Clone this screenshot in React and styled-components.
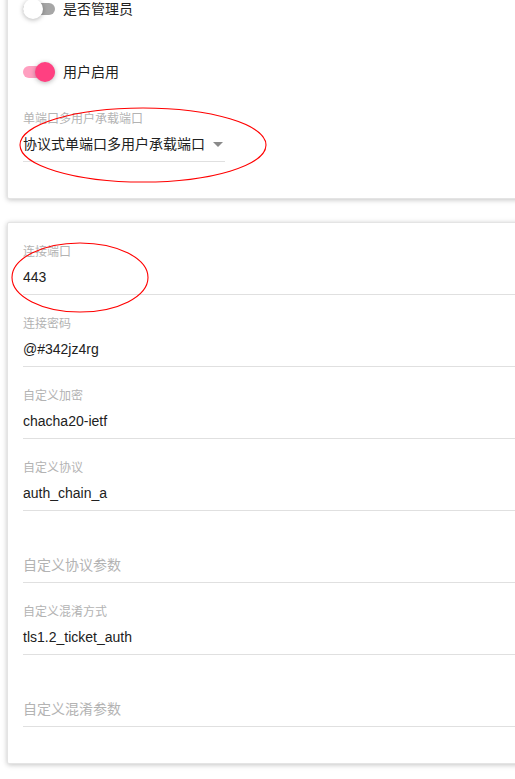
import React from "react";
import styled, { createGlobalStyle } from "styled-components";

const GlobalStyle = createGlobalStyle`
  html, body {
    margin: 0;
    padding: 0;
    background: #ffffff;
    overflow: hidden;
  }
  body {
    font-family: "Liberation Sans", "Noto Sans CJK SC", sans-serif;
  }
`;

const Page = styled.div`
  position: relative;
  width: 515px;
  height: 779px;
  overflow: hidden;
`;

const Column = styled.div`
  display: flex;
  flex-direction: column;
  gap: 23px;
  padding-left: 7px;
  margin-top: -20px;
  margin-right: -40px;
`;

const Card = styled.div`
  background: #ffffff;
  border: 1px solid #e4e4e4;
  border-radius: 2px;
  box-shadow: 0 1px 6px rgba(0, 0, 0, 0.12), 0 1px 4px rgba(0, 0, 0, 0.12);
  padding: ${(p) => (p.$top ? "16px" : "0")} 0 36px 15px;
  display: flex;
  flex-direction: column;
`;

const ToggleRow = styled.div`
  display: flex;
  align-items: center;
  gap: 8px;
  height: 24px;
  margin-bottom: ${(p) => p.$gap || 0}px;
`;

const ToggleBox = styled.div`
  position: relative;
  width: 32px;
  height: 20px;
  flex-shrink: 0;
`;

const Track = styled.div`
  position: absolute;
  top: 4px;
  left: 0;
  width: 32px;
  height: 12px;
  border-radius: 6px;
  background: ${(p) => (p.$on ? "#ff9fc0" : "#a6a6a6")};
`;

const Knob = styled.div`
  position: absolute;
  top: 0;
  left: ${(p) => (p.$on ? "12px" : "0")};
  width: 20px;
  height: 20px;
  border-radius: 50%;
  background: ${(p) => (p.$on ? "#ff4081" : "#ffffff")};
  box-shadow: 0 1px 6px rgba(0, 0, 0, 0.12), 0 1px 4px rgba(0, 0, 0, 0.18);
`;

const ToggleLabel = styled.span`
  font-size: 14px;
  color: #212121;
  line-height: 20px;
`;

const Field = styled.div`
  display: flex;
  flex-direction: column;
  padding: 22px 0 7px;
  border-bottom: 1px solid #e0e0e0;
  width: ${(p) => (p.$width ? `${p.$width}px` : "auto")};
  position: relative;
`;

const FieldLabel = styled.div`
  font-size: 12px;
  line-height: 14px;
  height: 14px;
  color: #b3b3b3;
  white-space: nowrap;
`;

const FieldValue = styled.div`
  margin-top: 8px;
  font-size: 14px;
  line-height: 20px;
  height: 20px;
  color: ${(p) => (p.$placeholder ? "#b3b3b3" : "#212121")};
  white-space: nowrap;
  display: flex;
  align-items: center;
  justify-content: space-between;
`;

const Caret = styled.span`
  width: 0;
  height: 0;
  border-left: 5px solid transparent;
  border-right: 5px solid transparent;
  border-top: 5px solid #8a8a8a;
  margin-right: 2px;
`;

const Marks = styled.svg`
  position: absolute;
  top: 0;
  left: 0;
  pointer-events: none;
`;

const Toggle = ({ on, label, gap }) => (
  <ToggleRow $gap={gap}>
    <ToggleBox>
      <Track $on={on} />
      <Knob $on={on} />
    </ToggleBox>
    <ToggleLabel>{label}</ToggleLabel>
  </ToggleRow>
);

const fields = [
  { label: "连接端口", value: "443" },
  { label: "连接密码", value: "@#342jz4rg" },
  { label: "自定义加密", value: "chacha20-ietf" },
  { label: "自定义协议", value: "auth_chain_a" },
  { label: "", value: "自定义协议参数", placeholder: true },
  { label: "自定义混淆方式", value: "tls1.2_ticket_auth" },
  { label: "", value: "自定义混淆参数", placeholder: true },
];

export default function App() {
  return (
    <Page>
      <GlobalStyle />
      <Column>
        <Card $top>
          <Toggle on={false} label="是否管理员" gap={39} />
          <Toggle on label="用户启用" gap={6} />
          <Field $width={202}>
            <FieldLabel>单端口多用户承载端口</FieldLabel>
            <FieldValue>
              协议式单端口多用户承载端口
              <Caret />
            </FieldValue>
          </Field>
        </Card>
        <Card>
          {fields.map((f, i) => (
            <Field key={i}>
              <FieldLabel>{f.label}</FieldLabel>
              <FieldValue $placeholder={f.placeholder}>{f.value}</FieldValue>
            </Field>
          ))}
        </Card>
      </Column>
      <Marks width="515" height="779" viewBox="0 0 515 779">
        <ellipse cx="143" cy="145" rx="123" ry="37" fill="none" stroke="#ff0000" strokeWidth="1.1" />
        <ellipse cx="80" cy="277.5" rx="68" ry="34.5" fill="none" stroke="#ff0000" strokeWidth="1.1" />
      </Marks>
    </Page>
  );
}
